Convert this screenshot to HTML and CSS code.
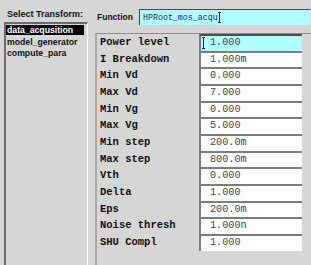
FILE: index.html
```html
<!DOCTYPE html>
<html lang="en">
<head>
    <meta charset="UTF-8">
    <title>Select Transform</title>
    <link rel="stylesheet" href="styles.css">
</head>
<body>
    <div class="app">
        <div class="transforms">
            <h2>Select Transform:</h2>
            <div class="listbox">
                <div class="item selected">data_acqusition</div>
                <div class="item">model_generator</div>
                <div class="item">compute_para</div>
            </div>
        </div>

        <div class="editor">
            <div class="function-row">
                <label>Function</label>
                <div class="function-input">HPRoot_mos_acqu<span class="caret"></span></div>
            </div>

            <div class="params">
                <div class="param">
                    <span class="name">Power level</span>
                    <span class="value active"><span class="caret"></span>1.000</span>
                </div>
                <div class="param">
                    <span class="name">I Breakdown</span>
                    <span class="value">1.000m</span>
                </div>
                <div class="param">
                    <span class="name">Min Vd</span>
                    <span class="value">0.000</span>
                </div>
                <div class="param">
                    <span class="name">Max Vd</span>
                    <span class="value">7.000</span>
                </div>
                <div class="param">
                    <span class="name">Min Vg</span>
                    <span class="value">0.000</span>
                </div>
                <div class="param">
                    <span class="name">Max Vg</span>
                    <span class="value">5.000</span>
                </div>
                <div class="param">
                    <span class="name">Min step</span>
                    <span class="value">200.0m</span>
                </div>
                <div class="param">
                    <span class="name">Max step</span>
                    <span class="value">800.0m</span>
                </div>
                <div class="param">
                    <span class="name">Vth</span>
                    <span class="value">0.000</span>
                </div>
                <div class="param">
                    <span class="name">Delta</span>
                    <span class="value">1.000</span>
                </div>
                <div class="param">
                    <span class="name">Eps</span>
                    <span class="value">200.0m</span>
                </div>
                <div class="param">
                    <span class="name">Noise thresh</span>
                    <span class="value">1.000n</span>
                </div>
                <div class="param">
                    <span class="name">SHU Compl</span>
                    <span class="value">1.000</span>
                </div>
            </div>
        </div>
    </div>
</body>
</html>
```

FILE: styles.css
```css
body {
    margin: 0;
    background-color: #d6d6d6;
    font-family: "Liberation Sans", Arial, sans-serif;
    color: #111;
}

.app {
    display: flex;
    height: 265px;
    overflow: hidden;
}

.transforms {
    width: 95px;
    display: flex;
    flex-direction: column;
}

.transforms h2 {
    font-size: 9px;
    font-weight: bold;
    line-height: 10px;
    margin: 9px 0 3px 7px;
}

.listbox {
    flex: 1;
    width: 84px;
    margin-left: 4px;
    padding-top: 1px;
    box-sizing: border-box;
    border-top: 2px solid #6b6b6b;
    border-left: 2px solid #6b6b6b;
    border-right: 1px solid #ffffff;
}

.item {
    font-size: 8.7px;
    font-weight: bold;
    line-height: 10px;
    padding-left: 1px;
    margin-right: 3px;
    margin-bottom: 1.5px;
    white-space: nowrap;
}

.item.selected {
    background-color: #000000;
    color: #ffffff;
}

.editor {
    flex: 1;
    display: flex;
    flex-direction: column;
}

.function-row {
    display: flex;
    align-items: center;
    height: 16px;
    margin: 9px 0 8px 0;
    padding-left: 2px;
}

.function-row label {
    width: 42px;
    font-size: 8.5px;
    font-weight: bold;
}

.function-input {
    flex: 1;
    height: 16px;
    margin-right: 1px;
    padding-left: 3px;
    box-sizing: border-box;
    border-top: 1px solid #4a4a4a;
    border-left: 1px solid #4a4a4a;
    background-color: #b0ffff;
    font-family: "Liberation Mono", "Courier New", monospace;
    font-size: 8.3px;
    color: #22226a;
    display: flex;
    align-items: center;
}

.caret {
    display: inline-block;
    width: 3px;
    height: 9px;
    border-top: 1px solid #333;
    border-bottom: 1px solid #333;
    background: linear-gradient(#333, #333) center / 1px 100% no-repeat;
}

.params {
    flex: 1;
    border-top: 1px solid #8c8c8c;
    border-left: 2px solid #a9a9a9;
    padding-left: 3px;
}

.param {
    display: flex;
    height: 16.67px;
}

.param .name {
    width: 99px;
    font-family: "Liberation Mono", "Courier New", monospace;
    font-size: 10.5px;
    font-weight: bold;
    line-height: 16.67px;
    white-space: pre;
}

.param .value {
    width: 103px;
    box-sizing: border-box;
    border-top: 2px solid #7d7d7d;
    border-left: 2px solid #7d7d7d;
    background-color: #ffffff;
    padding-left: 9px;
    font-family: "Liberation Mono", "Courier New", monospace;
    font-size: 10.2px;
    line-height: 14.67px;
    color: #444;
    display: flex;
    align-items: center;
}

.param .value.active {
    background-color: #b0ffff;
    border-top-color: #4d4d4d;
    padding-left: 1px;
}

.param .value.active .caret {
    margin-right: 5px;
    height: 10px;
}
```
